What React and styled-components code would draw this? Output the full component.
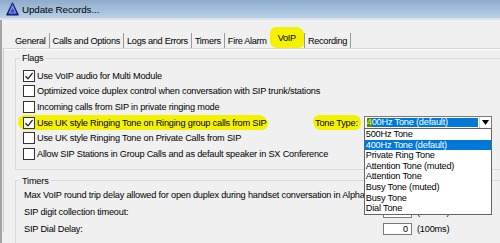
import React from 'react'
import styled, { createGlobalStyle } from 'styled-components'

const flags = [
  { label: 'Use VoIP audio for Multi Module', checked: true },
  { label: 'Optimized voice duplex control when conversation with SIP trunk/stations' },
  { label: 'Incoming calls from SIP in private ringing mode' },
  { label: 'Use UK style Ringing Tone on Ringing group calls from SIP', checked: true, tone: true },
  { label: 'Use UK style Ringing Tone on Private Calls from SIP' },
  { label: 'Allow SIP Stations in Group Calls and as default speaker in SX Conference' },
]

const tones = [
  '500Hz Tone',
  '400Hz Tone (default)',
  'Private Ring Tone',
  'Attention Tone (muted)',
  'Attention Tone',
  'Busy Tone (muted)',
  'Busy Tone',
  'Dial Tone',
]

const timers = [
  { label: 'Max VoIP round trip delay allowed for open duplex during handset conversation in AlphaCom', value: '50' },
  { label: 'SIP digit collection timeout:', value: '50' },
  { label: 'SIP Dial Delay:', value: '0' },
]

const tabs = ['General', 'Calls and Options', 'Logs and Errors', 'Timers', 'Fire Alarm', 'VoIP', 'Recording']

const Check = ({ checked }) => (
  <Box>
    {checked && (
      <svg width="10" height="10" viewBox="0 0 10 10">
        <path d="M1.5 5.2 L4 7.8 L8.6 1.8" fill="none" stroke="#222" strokeWidth="1.3" />
      </svg>
    )}
  </Box>
)

const App = () => {
  return (
    <Window>
      <GlobalStyle />
      <TitleBar>
        <svg width="13" height="14" viewBox="0 0 13 14">
          <defs>
            <linearGradient id="tri" x1="0" y1="0" x2="0" y2="1">
              <stop offset="0" stopColor="#5b82f0" />
              <stop offset="1" stopColor="#1a2fb0" />
            </linearGradient>
          </defs>
          <polygon points="6.5,0.8 12.4,13 0.6,13" fill="url(#tri)" stroke="#0c1755" strokeWidth="1" />
          <polygon points="6.5,4.5 9.6,11 3.4,11" fill="none" stroke="#9fb6ff" strokeWidth="0.8" />
        </svg>
        <span>Update Records...</span>
      </TitleBar>
      <Body>
        <TabStrip>
          {tabs.map((t, i) => (
            <Tab key={t} $first={i === 0} $active={t === 'VoIP'} $last={i === tabs.length - 1}>
              {t}
            </Tab>
          ))}
        </TabStrip>
        <Panel>
          <Group>
            <Legend>Flags</Legend>
            <Rows>
              {flags.map((f) =>
                f.tone ? (
                  <FlagRow key={f.label}>
                    <LeftCell>
                      <Marker>
                        <Check checked={f.checked} />
                        <span>{f.label}</span>
                      </Marker>
                    </LeftCell>
                    <ToneLabel>Tone Type:</ToneLabel>
                    <Select>
                      <Value>
                        <Caret>4</Caret>00Hz Tone (default)
                      </Value>
                      <ArrowBtn>
                        <svg width="7" height="5" viewBox="0 0 7 5">
                          <polygon points="0,0 7,0 3.5,5" fill="#000" />
                        </svg>
                      </ArrowBtn>
                      <List>
                        {tones.map((t) => (
                          <Item key={t} $selected={t === '400Hz Tone (default)'}>
                            {t}
                          </Item>
                        ))}
                      </List>
                    </Select>
                  </FlagRow>
                ) : (
                  <FlagRow key={f.label}>
                    <Check checked={f.checked} />
                    <span>{f.label}</span>
                  </FlagRow>
                )
              )}
            </Rows>
          </Group>
          <Group $timers>
            <Legend>Timers</Legend>
            {timers.map((t) => (
              <TimerRow key={t.label}>
                <TimerLabel>{t.label}</TimerLabel>
                <NumBox>{t.value}</NumBox>
                <Unit>(100ms)</Unit>
              </TimerRow>
            ))}
          </Group>
        </Panel>
      </Body>
    </Window>
  )
}

export default App

const GlobalStyle = createGlobalStyle`
  html, body {
    margin: 0;
    padding: 0;
    background: #f0f0f0;
  }
`
const Window = styled.div`
  width: 500px;
  height: 243px;
  overflow: hidden;
  background: #f0f0f0;
  color: #000;
  font-family: "Liberation Sans", Arial, sans-serif;
  font-size: 9.2px;
  letter-spacing: -0.2px;
`
const TitleBar = styled.div`
  height: 18px;
  display: flex;
  align-items: center;
  gap: 3px;
  padding-left: 6px;
  background: linear-gradient(#8dabca, #b8d0e9);
  border-bottom: 2px solid #dae2eb;
  font-size: 9.8px;
  letter-spacing: -0.1px;
  color: #000;
`
const Body = styled.div`
  height: 223px;
  box-sizing: border-box;
  border-left: 2px solid #a3a3a3;
  padding: 7px 0 0 1px;
`
const TabStrip = styled.div`
  height: 21px;
  display: flex;
  align-items: flex-end;
  padding-left: 7px;
  letter-spacing: -0.3px;
`
const Tab = styled.div`
  height: ${(p) => (p.$active ? '21px' : '15px')};
  display: flex;
  align-items: center;
  padding: ${(p) => (p.$active ? '0 8px' : p.$first ? '0 3px 0 5px' : '0 3px')};
  border-left: ${(p) => (p.$first || p.$active ? 'none' : '1px solid #9a9a9a')};
  border-right: ${(p) => (p.$last ? '1px solid #9a9a9a' : 'none')};
  background: ${(p) => (p.$active ? '#f5f200' : 'transparent')};
  border-radius: ${(p) => (p.$active ? '6px 8px 5px 7px' : '0')};
  white-space: nowrap;
`
const Panel = styled.div`
  width: 700px;
  height: 180px;
  border-top: 1px solid #d6d6d6;
  border-left: 1px solid #cdcdcd;
  box-shadow: inset 0 1px 0 #fff;
  padding: 3px 0 0 11px;
`
const Group = styled.fieldset`
  margin: ${(p) => (p.$timers ? '5px 0 0' : '0')};
  padding: 0 0 7px 4px;
  border: 1px solid #d8dbde;
  min-width: 0;
`
const Legend = styled.legend`
  padding: 0 2px;
  line-height: 12px;
`
const Rows = styled.div`
  padding: 4px 0 0 3px;
`
const FlagRow = styled.div`
  height: 15.6px;
  display: flex;
  align-items: center;
  white-space: nowrap;
`
const Box = styled.span`
  width: 12px;
  height: 12px;
  box-sizing: border-box;
  border: 1px solid #333;
  background: #fff;
  margin-right: 2px;
  display: inline-flex;
  align-items: center;
  justify-content: center;
  flex: none;
`
const LeftCell = styled.div`
  width: 290px;
  flex: none;
  display: flex;
`
const Marker = styled.span`
  display: flex;
  align-items: center;
  height: 15px;
  margin-left: -5px;
  padding: 0 2px 0 5px;
  background: #f5f200;
  border-radius: 7px 9px 6px 8px;
`
const ToneLabel = styled.span`
  height: 15px;
  display: flex;
  align-items: center;
  padding: 0 3px 0 2px;
  background: #f5f200;
  border-radius: 6px 7px 6px 8px;
`
const Select = styled.div`
  position: relative;
  margin-left: 3px;
  width: 128px;
  height: 13px;
  box-sizing: border-box;
  border: 1px solid #7a7a7a;
  background: #fff;
  display: flex;
`
const Value = styled.span`
  flex: 1;
  margin: 1px 1px 1px 2px;
  background: #0078d7;
  color: #fff;
  line-height: 9px;
  display: flex;
  align-items: center;
`
const Caret = styled.span`
  background: #4e8a1e;
  color: #e6ef3a;
`
const ArrowBtn = styled.span`
  width: 11px;
  display: flex;
  align-items: center;
  justify-content: center;
  border-left: 1px solid #d0d0d0;
`
const List = styled.div`
  position: absolute;
  top: 100%;
  left: -1px;
  width: 128px;
  box-sizing: border-box;
  border: 1px solid #646464;
  background: #fff;
  z-index: 2;
`
const Item = styled.div`
  height: 10.6px;
  line-height: 10.6px;
  padding-left: 1px;
  background: ${(p) => (p.$selected ? '#0078d7' : 'transparent')};
  color: ${(p) => (p.$selected ? '#fff' : '#000')};
  white-space: nowrap;
`
const TimerRow = styled.div`
  height: 17px;
  display: grid;
  grid-template-columns: 359px 29px auto;
  align-items: center;
  padding-left: 4px;
  white-space: nowrap;
`
const TimerLabel = styled.span`
  overflow: hidden;
`
const NumBox = styled.span`
  height: 12px;
  box-sizing: border-box;
  border: 1px solid #7a7a7a;
  background: #fff;
  text-align: right;
  padding-right: 3px;
  line-height: 10px;
`
const Unit = styled.span`
  margin-left: 5px;
`
